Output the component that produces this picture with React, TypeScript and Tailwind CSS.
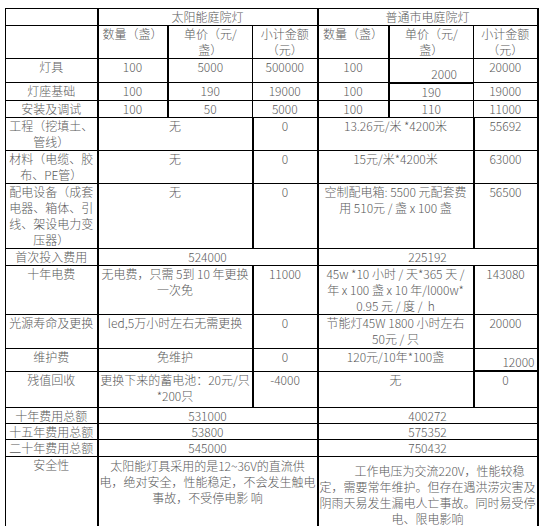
import type { ReactNode } from "react";

type CellProps = {
  children?: ReactNode;
  span?: number;
  bottom?: boolean;
  className?: string;
};

function Cell({ children, span, bottom, className = "" }: CellProps) {
  return (
    <td
      colSpan={span}
      className={`border border-black p-0 text-center whitespace-nowrap ${bottom ? "align-bottom" : "align-top"} ${className}`}
    >
      {children}
    </td>
  );
}

const widths = [92, 70, 85, 65, 71, 85, 64];

export default function App() {
  return (
    <div className="min-h-screen bg-white pt-2 pl-[5px]">
      <table
        className="table-fixed border-collapse text-[12px] leading-[16px] font-light text-[#5a5a5a]"
        style={{ fontFamily: '"Noto Sans CJK SC", "Noto Sans", sans-serif' }}
      >
        <colgroup>
          {widths.map((w, i) => (
            <col key={i} style={{ width: w }} />
          ))}
        </colgroup>
        <tbody>
          <tr className="h-[17px]">
            <Cell />
            <Cell span={3} className="border-l-2">太阳能庭院灯</Cell>
            <Cell span={3} className="border-l-2 border-r-2">普通市电庭院灯</Cell>
          </tr>
          <tr className="h-[33px]">
            <Cell />
            <Cell className="border-l-2">数量（盏）</Cell>
            <Cell className="border-l-2">单价（元/<br />盏）</Cell>
            <Cell>小计金额<br />（元）</Cell>
            <Cell className="border-l-2">数量（盏）</Cell>
            <Cell className="border-l-2">单价（元/<br />盏）</Cell>
            <Cell className="border-r-2">小计金额<br />（元）</Cell>
          </tr>
          <tr className="h-[24px]">
            <Cell>灯具</Cell>
            <Cell className="border-l-2">100</Cell>
            <Cell className="border-l-2">5000</Cell>
            <Cell>500000</Cell>
            <Cell className="border-l-2">100</Cell>
            <Cell bottom className="border-l-2 border-b-2 text-right pr-[16px]">2000</Cell>
            <Cell className="border-r-2">20000</Cell>
          </tr>
          <tr className="h-[17px]">
            <Cell>灯座基础</Cell>
            <Cell className="border-l-2">100</Cell>
            <Cell className="border-l-2">190</Cell>
            <Cell>19000</Cell>
            <Cell className="border-l-2">100</Cell>
            <Cell className="border-l-2">190</Cell>
            <Cell className="border-r-2">19000</Cell>
          </tr>
          <tr className="h-[17px]">
            <Cell>安装及调试</Cell>
            <Cell className="border-l-2">100</Cell>
            <Cell className="border-l-2">50</Cell>
            <Cell>5000</Cell>
            <Cell className="border-l-2">100</Cell>
            <Cell className="border-l-2">110</Cell>
            <Cell className="border-r-2">11000</Cell>
          </tr>
          <tr className="h-[33px]">
            <Cell>工程（挖填土、<br />管线）</Cell>
            <Cell span={2} className="border-l-2">无</Cell>
            <Cell className="border-l-2">0</Cell>
            <Cell span={2} className="border-l-2">13.26元/米 *4200米</Cell>
            <Cell className="border-l-2 border-r-2">55692</Cell>
          </tr>
          <tr className="h-[33px]">
            <Cell>材料（电缆、胶<br />布、PE管）</Cell>
            <Cell span={2} className="border-l-2">无</Cell>
            <Cell className="border-l-2">0</Cell>
            <Cell span={2} className="border-l-2">15元/米*4200米</Cell>
            <Cell className="border-l-2 border-r-2">63000</Cell>
          </tr>
          <tr className="h-[65px]">
            <Cell>
              配电设备（成套
              <br />电器、箱体、引
              <br />线、架设电力变
              <br />压器）
            </Cell>
            <Cell span={2} className="border-l-2">无</Cell>
            <Cell className="border-l-2">0</Cell>
            <Cell span={2} className="border-l-2">
              空制配电箱: 5500 元配套费
              <br />用 510元 / 盏 x 100 盏
            </Cell>
            <Cell className="border-l-2 border-r-2">56500</Cell>
          </tr>
          <tr className="h-[17px]">
            <Cell>首次投入费用</Cell>
            <Cell span={3} className="border-l-2">524000</Cell>
            <Cell span={3} className="border-l-2 border-r-2">225192</Cell>
          </tr>
          <tr className="h-[49px]">
            <Cell>十年电费</Cell>
            <Cell span={2} className="border-l-2">
              无电费，只需 5到 10 年更换
              <br />一次免
            </Cell>
            <Cell className="border-l-2">11000</Cell>
            <Cell span={2} className="border-l-2">
              45w *10 小时 / 天*365 天 /
              <br />年 x 100 盏 x 10 年/l000w*
              <br />0.95 元 / 度 /&nbsp; h
            </Cell>
            <Cell className="border-l-2 border-r-2">143080</Cell>
          </tr>
          <tr className="h-[34px]">
            <Cell>光源寿命及更换</Cell>
            <Cell span={2} className="border-l-2">led,5万小时左右无需更换</Cell>
            <Cell className="border-l-2">0</Cell>
            <Cell span={2} className="border-l-2">
              节能灯45W 1800 小时左右
              <br />50元 / 只
            </Cell>
            <Cell className="border-l-2 border-r-2">20000</Cell>
          </tr>
          <tr className="h-[23px]">
            <Cell>维护费</Cell>
            <Cell span={2} className="border-l-2">免维护</Cell>
            <Cell className="border-l-2">0</Cell>
            <Cell span={2} className="border-l-2">120元/10年*100盏</Cell>
            <Cell bottom className="border-l-2 border-r-2 border-b-2 text-right pr-[2px]">12000</Cell>
          </tr>
          <tr className="h-[36px]">
            <Cell>残值回收</Cell>
            <Cell span={2} className="border-l-2">
              更换下来的蓄电池：20元/只
              <br />*200只
            </Cell>
            <Cell className="border-l-2">-4000</Cell>
            <Cell span={2} className="border-l-2">无</Cell>
            <Cell className="border-l-2 border-r-2">0</Cell>
          </tr>
          <tr className="h-[16px]">
            <Cell className="leading-[15px]">十年费用总额</Cell>
            <Cell span={3} className="border-l-2 leading-[15px]">531000</Cell>
            <Cell span={3} className="border-l-2 border-r-2 leading-[15px]">400272</Cell>
          </tr>
          <tr className="h-[16px]">
            <Cell className="leading-[15px]">十五年费用总额</Cell>
            <Cell span={3} className="border-l-2 leading-[15px]">53800</Cell>
            <Cell span={3} className="border-l-2 border-r-2 leading-[15px]">575352</Cell>
          </tr>
          <tr className="h-[17px]">
            <Cell>二十年费用总额</Cell>
            <Cell span={3} className="border-l-2">545000</Cell>
            <Cell span={3} className="border-l-2 border-r-2">750432</Cell>
          </tr>
          <tr className="h-[71px]">
            <Cell>安全性</Cell>
            <Cell span={3} className="border-l-2 pt-px">
              太阳能灯具采用的是12~36V的直流供
              <br />电，绝对安全，性能稳定，不会发生触电
              <br />事故，不受停电影 响
            </Cell>
            <Cell span={3} bottom className="border-l-2 border-r-2">
              <span className="pl-[24px]">工作电压为交流220V，性能较稳</span>
              <br />定，需要常年维护。但存在遇洪涝灾害及
              <br />阴雨天易发生漏电人亡事故。同时易受停
              <br />电、限电影响
            </Cell>
          </tr>
        </tbody>
      </table>
    </div>
  );
}
